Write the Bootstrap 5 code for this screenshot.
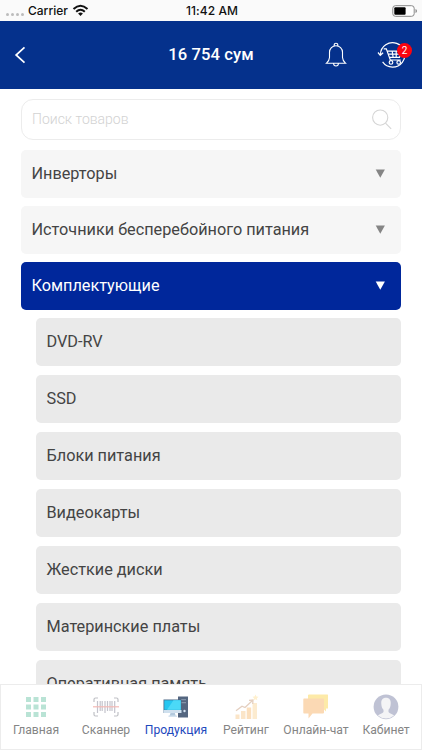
<!DOCTYPE html>
<html lang="ru">
<head>
<meta charset="utf-8">
<meta name="viewport" content="width=device-width, initial-scale=1">
<title>Продукция</title>
<link href="https://cdn.jsdelivr.net/npm/bootstrap@5.3.0/dist/css/bootstrap.min.css" rel="stylesheet">
<style>
  body { font-family: Roboto, "Noto Sans", sans-serif; color: #444; background: #fff; height: 750px; }
  svg { display: block; flex: none; }
  .status-bar { height: 21px; background: #fafafa; color: #111; font: 500 12px/20px Inter, sans-serif; padding: 0 4px 0 6px; }
  .status-time { letter-spacing: .08px; }
  .signal-dots { gap: 2px; padding-top: 7px; margin-right: 4px; }
  .signal-dots i { width: 3px; height: 3px; border-radius: 50%; background: #bcbcbc; }
  .side { flex: 1 1 0; }
  .app-header { height: 68px; background: #05318c; padding: 0 13px; }
  .app-title { font-size: 16.6px; font-weight: 500; line-height: 24px; letter-spacing: .1px; }
  .header-icons { gap: 27px; }
  .count-badge { top: 2px; right: -3px; width: 15px; height: 15px; background: #fb0410; font-size: 10px; line-height: 15px; }
  .catalog { padding: 10px 21px 0 21px; }
  .search-box { height: 41px; border: 1px solid #ececec; border-radius: 12px; padding: 0 8px 0 10px; margin-bottom: 10px; }
  .search-box input { font-size: 14px; font-weight: 300; color: #444; background: transparent; box-shadow: none; outline: 0; }
  .search-box input::placeholder { color: #d2d2d2; opacity: 1; }
  .group-row { height: 48px; margin-bottom: 8px; padding: 0 15px 0 10.5px; border-radius: 5px; background: #f6f6f6; font-size: 16.25px; line-height: 24px; color: #444; }
  .group-row.open { background: #00279b; color: #fff; }
  .group-row svg { fill: #858585; }
  .group-row.open svg { fill: #fff; }
  .sub-list { padding-left: 15px; }
  .sub-row { height: 48px; flex: none; margin-bottom: 9px; padding: 0 10.5px; border-radius: 5px; background: #eaeaea; font-size: 16.25px; line-height: 24px; }
  .tab-bar { height: 66px; background: #fff; border: 1px solid #ececec; }
  .tab-link { flex: 1 1 0; color: #858585; font-size: 12.15px; line-height: 16px; padding-top: 9px; }
  .tab-link svg { margin-bottom: 2px; }
  .tab-link.active { color: #1e49bd; }
</style>
<script src="https://cdn.jsdelivr.net/npm/bootstrap@5.3.0/dist/js/bootstrap.bundle.min.js"></script>
</head>
<body class="d-flex flex-column overflow-hidden">
<div class="status-bar d-flex align-items-center flex-shrink-0">
  <div class="side d-flex align-items-center">
    <span class="signal-dots d-flex"><i></i><i></i><i></i><i></i></span>
    <span>Carrier</span>
    <svg class="ms-1" width="17" height="13" viewBox="0 0 17 13"><g fill="none" stroke="#111" stroke-width="2"><path d="M1.5 5.1Q8.5-1.5 15.5 5.1"/><path d="M4.2 7.8Q8.5 3.6 12.8 7.8"/></g><path d="M6.1 9.6Q8.5 7.4 10.9 9.6L8.5 12z" fill="#111"/></svg>
  </div>
  <div class="status-time">11:42 AM</div>
  <div class="side d-flex justify-content-end">
    <svg width="26" height="12" viewBox="0 0 26 12"><rect x=".8" y=".7" width="21.4" height="10.6" rx="2.6" fill="#fff" stroke="#888"/><rect x="2.3" y="2.2" width="11.3" height="7.6" rx="1" fill="#000"/><path d="M23.5 4v4q1.5-.5 1.5-2t-1.5-2z" fill="#888"/></svg>
  </div>
</div>

<header class="app-header text-white d-flex align-items-center flex-shrink-0">
  <div class="side"><svg width="14" height="18" viewBox="0 0 14 18"><path d="M11.5 1.3 3.1 9l8.4 7.7" fill="none" stroke="#fff" stroke-width="1.7"/></svg></div>
  <div class="app-title">16 754 сум</div>
  <div class="side header-icons d-flex justify-content-end align-items-center">
    <svg width="22" height="26" viewBox="0 0 22 26" fill="none" stroke="#fff" stroke-width="1.1"><path d="M9.2 4.1V3a1.8 1.8 0 0 1 3.6 0v1.1M1.3 21.3h19.4q-3.2-2.7-3.2-5.7v-5.3a6.5 6.5 0 0 0-13 0v5.3q0 3-3.2 5.7zM8.6 21.6a2.4 2.4 0 0 0 4.8 0"/></svg>
    <div class="position-relative">
      <svg width="35" height="28" viewBox="0 0 35 28" fill="none" stroke="#fff" stroke-width="1.2"><path d="M6.400 13.500a12.200 12.200 0 1 1 2.200 7.400M4 11.500l2.300 2.800 2.800-2.500"/><path d="M9.700 7.800h2.600l4 11.200h10.400M13.300 10.200h14l-1.800 6.100H15.400M14.200 13.200h12.200M18.200 10.200l.9 6M22.200 10.200v6"/><circle cx="17" cy="21.400" r="1.800"/><circle cx="24.700" cy="21.400" r="1.800"/></svg>
      <span class="count-badge position-absolute rounded-circle text-center">2</span>
    </div>
  </div>
</header>

<main class="catalog flex-grow-1 overflow-hidden">
  <div class="search-box d-flex align-items-center">
    <input class="border-0 p-0 flex-grow-1" type="text" placeholder="Поиск товаров" aria-label="Поиск товаров">
    <svg width="20" height="21" viewBox="0 0 20 21" fill="none" stroke="#d5d5d5" stroke-width="1.1"><circle cx="8.200" cy="8.600" r="7.600"/><path d="m13.500 14.200 5.700 5.700"/></svg>
  </div>
  <div class="group-row d-flex align-items-center justify-content-between"><span>Инверторы</span><svg width="11" height="10" viewBox="0 0 11 10"><path d="M.7.500h9.200L5.300 8.700z"/></svg></div>
  <div class="group-row d-flex align-items-center justify-content-between"><span>Источники бесперебойного питания</span><svg width="11" height="10" viewBox="0 0 11 10"><path d="M.7.500h9.200L5.300 8.700z"/></svg></div>
  <div class="group-row open d-flex align-items-center justify-content-between"><span>Комплектующие</span><svg width="11" height="10" viewBox="0 0 11 10"><path d="M.7.500h9.200L5.300 8.700z"/></svg></div>
  <div class="sub-list d-flex flex-column">
    <div class="sub-row d-flex align-items-center">DVD-RV</div>
    <div class="sub-row d-flex align-items-center">SSD</div>
    <div class="sub-row d-flex align-items-center">Блоки питания</div>
    <div class="sub-row d-flex align-items-center">Видеокарты</div>
    <div class="sub-row d-flex align-items-center">Жесткие диски</div>
    <div class="sub-row d-flex align-items-center">Материнские платы</div>
    <div class="sub-row d-flex align-items-center">Оперативная память</div>
  </div>
</main>

<nav class="tab-bar d-flex flex-shrink-0 text-nowrap">
  <a class="tab-link d-flex flex-column align-items-center text-decoration-none" href="#">
    <svg width="26" height="26" viewBox="0 0 26 26" fill="#b9e3d5"><path d="M3 3h5v5H3zM10.500 3h5v5h-5zM18 3h5v5h-5zM3 10.400h5v5H3zM10.500 10.400h5v5h-5zM18 10.400h5v5h-5zM3 18h5v5H3zM10.500 18h5v5h-5zM18 18h5v5h-5z"/></svg>
    <span>Главная</span>
  </a>
  <a class="tab-link d-flex flex-column align-items-center text-decoration-none" href="#">
    <svg width="26" height="26" viewBox="0 0 26 26" fill="none"><path d="M1 8V5.500Q1 4 2.500 4H5M21 4h2.500Q25 4 25 5.500V8M1 18v2.500Q1 22 2.500 22H5M21 22h2.500Q25 22 25 20.500V18" stroke="#bfc0c5" stroke-width="1.200"/><path d="M4.500 7v12M7.200 7v10M9.200 7v10M12 7v12M14.500 7v10M17 7v10M19 7v10M21.700 7v12" stroke="#c3c3cc" stroke-width="1.200"/><path d="M0 12.800h26" stroke="#f3b9b5" stroke-width="1.200"/></svg>
    <span>Сканнер</span>
  </a>
  <a class="tab-link active d-flex flex-column align-items-center text-decoration-none" href="#">
    <svg width="26" height="26" viewBox="0 0 26 26"><path d="M15 2.500h10v21H15z" fill="#546680"/><path d="M18 5h5v1.200h-5zM18 8h5v1.200h-5z" fill="#8494a8"/><circle cx="21.500" cy="17" r="1.200" fill="#d6e5f2"/><path d="M.500 5.500h18V19H.500z" fill="#4a6784"/><path d="M1.300 6.300h16.400v9.500H1.300z" fill="#26c6f0"/><path d="M10.500 6.300h7.200v9.500H4z" fill="#4bd9f7"/><path d="M.500 16h18v3H.500z" fill="#cfe0ee"/><path d="M7.500 19h4.300l1 3H6.500z" fill="#b2c9dd"/><path d="M5.500 21.500h8.500v1.500H5.500z" fill="#d5e3ef"/></svg>
    <span>Продукция</span>
  </a>
  <a class="tab-link d-flex flex-column align-items-center text-decoration-none" href="#">
    <svg width="26" height="26" viewBox="0 0 26 26"><path d="M2.500 20.500h4V25h-4zM8 17h4.500v8H8z" fill="#fbe5c8"/><path d="M13.700 13.500h4.500V25h-4.500z" fill="#fbdfbd"/><path d="M19.500 9h4.500v16h-4.500z" fill="#fcebcf"/><path d="m3 16.800 6-4.600 3 1.300 7.500-7M16 6.300l4-.3-.3 4" fill="none" stroke="#e4cfc0" stroke-width="1.300"/><path d="m22.500.5.9 2 2.100.2-1.600 1.500.4 2.100-1.800-1-1.900 1 .4-2.100-1.500-1.500 2.100-.2z" fill="#fff0ce"/></svg>
    <span>Рейтинг</span>
  </a>
  <a class="tab-link d-flex flex-column align-items-center text-decoration-none" href="#">
    <svg width="26" height="26" viewBox="0 0 26 26"><path d="M6 .500h18.500q.5 0 .5.500v13.500h-2v3l-3-3H5V1q0-.5 1-.5z" fill="#fdeaa8"/><path d="M1 4.500h19q1 0 1 1v13q0 1-1 1H9.500L5.500 24.500v-5H1q-.7 0-.7-1v-13q0-1 .7-1z" fill="#fbd9b4"/></svg>
    <span>Онлайн-чат</span>
  </a>
  <a class="tab-link d-flex flex-column align-items-center text-decoration-none" href="#">
    <svg width="26" height="26" viewBox="0 0 26 26"><circle cx="13" cy="12.800" r="12.400" fill="#bfc2d4"/><path d="M13 3.700c-3.700 0-5 2.700-4.700 6 .1 3 1 4.800 2.200 6v2.300c-1 1.700-3.800 1.800-5.600 3.500a12.400 12.400 0 0 0 16.200 0c-1.800-1.700-4.600-1.800-5.600-3.500v-2.300c1.200-1.200 2.100-3 2.200-6 .3-3.300-1-6-4.700-6z" fill="#f4f4f6"/></svg>
    <span>Кабинет</span>
  </a>
</nav>
</body>
</html>
